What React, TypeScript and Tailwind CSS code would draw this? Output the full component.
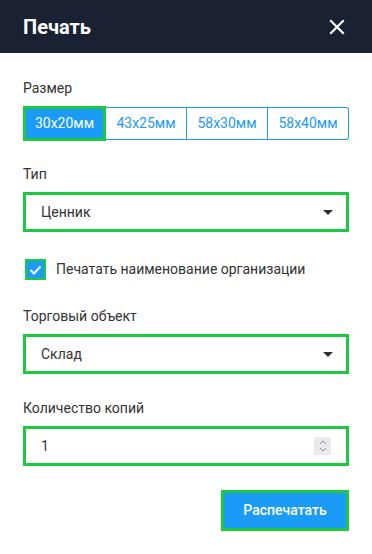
import { useState } from "react";

const sizes = ["30x20мм", "43x25мм", "58x30мм", "58x40мм"];

function Caret() {
  return (
    <svg width="10" height="5" viewBox="0 0 10 5" className="shrink-0">
      <path d="M0 0h10L5 5z" fill="#2b2f3a" />
    </svg>
  );
}

function SelectBox({ value }: { value: string }) {
  return (
    <div className="flex h-[40px] items-center justify-between border-[3px] border-[#1cc940] bg-white pl-[15px] pr-[13px] text-[14px] text-[#333]">
      <span>{value}</span>
      <Caret />
    </div>
  );
}

export default function App() {
  const [size, setSize] = useState(0);
  const [checked, setChecked] = useState(true);

  return (
    <div className="h-[554px] w-[372px] bg-white" style={{ fontFamily: "Roboto, 'Noto Sans', sans-serif" }}>
      <div className="flex h-[53px] items-center justify-between bg-[#1a2133] pl-[23px] pr-[27px]">
        <h1 className="text-[20px] font-bold text-white">Печать</h1>
        <svg width="16" height="16" viewBox="0 0 16 16">
          <path d="M2 2l12 12M14 2L2 14" stroke="#fff" strokeWidth="2.2" strokeLinecap="square" />
        </svg>
      </div>

      <div className="px-[23px]">
        <div className="mt-[25px] text-[14px] leading-[20px] text-[#333]">Размер</div>
        <div className="mt-[9px] flex h-[33px]">
          {sizes.map((s, i) => (
            <button
              key={s}
              onClick={() => setSize(i)}
              className={
                i === size
                  ? "-my-[1px] flex h-[35px] w-[83px] items-center justify-center border-[3px] border-[#1cc940] bg-[#1a9bf5] text-[14px] text-white"
                  : "flex w-[81px] items-center justify-center border border-l-0 border-[#1a9bf5] text-[14px] text-[#1a9bf5] last:rounded-r-[3px]"
              }
            >
              {s}
            </button>
          ))}
        </div>

        <div className="mt-[24px] text-[14px] leading-[20px] text-[#333]">Тип</div>
        <div className="mt-[8px]">
          <SelectBox value="Ценник" />
        </div>

        <label className="mt-[27px] flex items-center gap-[10px] pl-[2px]" onClick={() => setChecked(!checked)}>
          <span className="flex h-[21px] w-[21px] items-center justify-center border-2 border-[#1cc940] bg-[#1a9bf5]">
            {checked && (
              <svg width="13" height="10" viewBox="0 0 13 10">
                <path d="M1.5 5l3.5 3.5L11.5 1.5" stroke="#fff" strokeWidth="2" fill="none" />
              </svg>
            )}
          </span>
          <span className="text-[14px] text-[#333]">Печатать наименование организации</span>
        </label>

        <div className="mt-[26px] text-[14px] leading-[20px] text-[#333]">Торговый объект</div>
        <div className="mt-[8px]">
          <SelectBox value="Склад" />
        </div>

        <div className="mt-[24px] text-[14px] leading-[20px] text-[#333]">Количество копий</div>
        <div className="mt-[8px] flex h-[40px] items-center justify-between border-[3px] border-[#1cc940] bg-white pl-[15px] pr-[15px] text-[14px] text-[#333]">
          <span>1</span>
          <span className="flex h-[18px] w-[17px] flex-col items-center justify-center gap-[2px] bg-[#e9e9ee]">
            <svg width="8" height="5" viewBox="0 0 8 5">
              <path d="M1 4l3-3 3 3" stroke="#8a8a94" strokeWidth="1" fill="none" />
            </svg>
            <svg width="8" height="5" viewBox="0 0 8 5">
              <path d="M1 1l3 3 3-3" stroke="#8a8a94" strokeWidth="1" fill="none" />
            </svg>
          </span>
        </div>

        <div className="mt-[24px] flex justify-end">
          <button className="h-[41px] w-[128px] border-[3px] border-[#1cc940] bg-[#1a9bf5] text-[14px] font-medium text-white">
            Распечатать
          </button>
        </div>
      </div>
    </div>
  );
}
